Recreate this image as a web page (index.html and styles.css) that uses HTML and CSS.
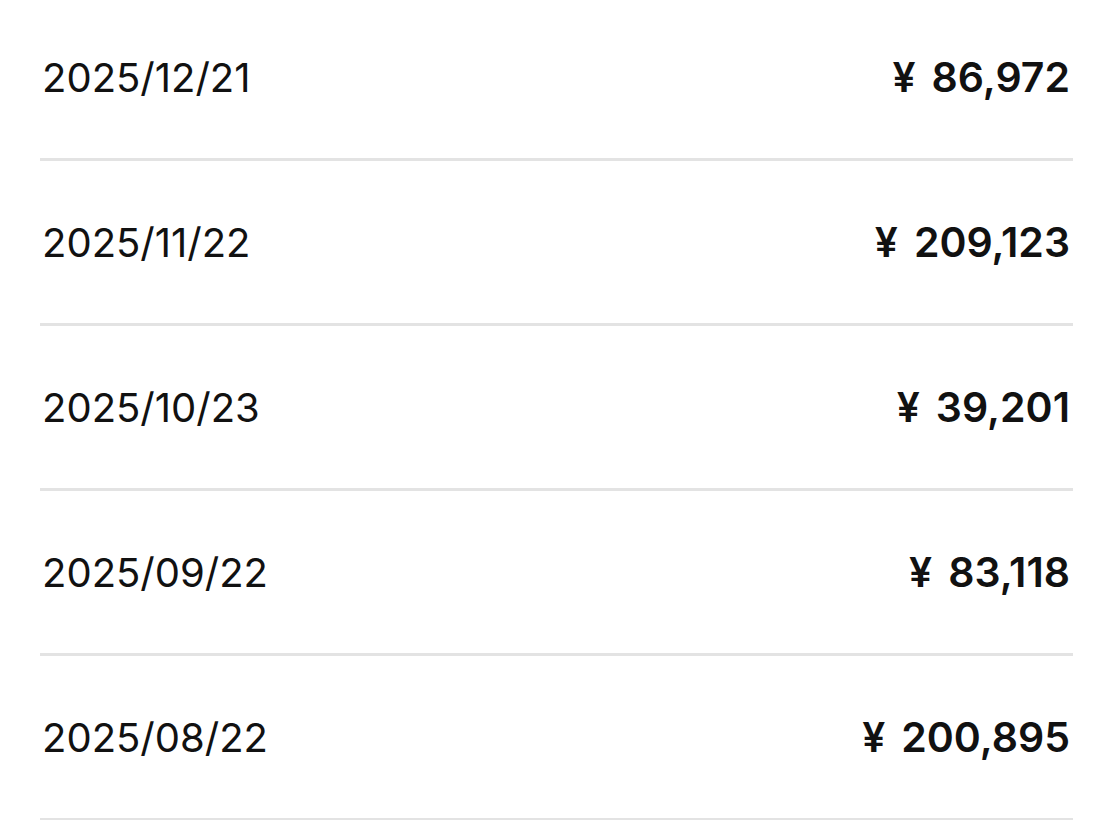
FILE: index.html
```html
<!DOCTYPE html>
<html lang="ja">
<head>
<meta charset="utf-8">
<link rel="stylesheet" href="styles.css">
</head>
<body>
<ul class="list">
  <li class="row"><span class="date">2025/12/21</span><span class="amount"><span class="yen">¥</span>86,972</span></li>
  <li class="row"><span class="date">2025/11/22</span><span class="amount"><span class="yen">¥</span>209,123</span></li>
  <li class="row"><span class="date">2025/10/23</span><span class="amount"><span class="yen">¥</span>39,201</span></li>
  <li class="row"><span class="date">2025/09/22</span><span class="amount"><span class="yen">¥</span>83,118</span></li>
  <li class="row"><span class="date">2025/08/22</span><span class="amount"><span class="yen">¥</span>200,895</span></li>
</ul>
</body>
</html>
```
FILE: styles.css
```css
html, body {
  margin: 0;
  padding: 0;
  background: #ffffff;
}
body {
  font-family: Inter, "Liberation Sans", Arial, sans-serif;
  color: #111111;
  overflow: hidden;
}
.list {
  list-style: none;
  margin: -4px 46px 0 40px;
  padding: 0;
}
.row {
  display: flex;
  align-items: center;
  justify-content: space-between;
  height: 162px;
  border-bottom: 3px solid #e3e3e3;
}
.date {
  font-size: 40px;
  font-weight: 400;
  padding-left: 2px;
}
.amount {
  font-size: 41px;
  font-weight: 600;
  padding-right: 3px;
}
.yen {
  margin-right: 16px;
}
```
